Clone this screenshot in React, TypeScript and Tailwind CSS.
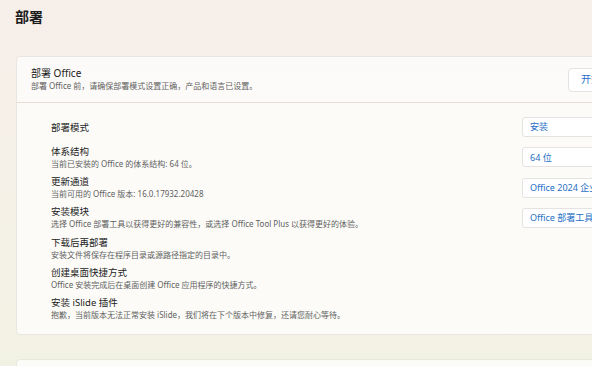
const rows: { title: string; desc?: string; value?: string }[] = [
    { title: '部署模式', value: '安装' },
    { title: '体系结构', desc: '当前已安装的 Office 的体系结构: 64 位。', value: '64 位' },
    { title: '更新通道', desc: '当前可用的 Office 版本: 16.0.17932.20428', value: 'Office 2024 企业长期版' },
    {
        title: '安装模块',
        desc: '选择 Office 部署工具以获得更好的兼容性，或选择 Office Tool Plus 以获得更好的体验。',
        value: 'Office 部署工具',
    },
    { title: '下载后再部署', desc: '安装文件将保存在程序目录或源路径指定的目录中。' },
    { title: '创建桌面快捷方式', desc: 'Office 安装完成后在桌面创建 Office 应用程序的快捷方式。' },
    { title: '安装 iSlide 插件', desc: '抱歉，当前版本无法正常安装 iSlide，我们将在下个版本中修复，还请您耐心等待。' },
];

export default function App() {
    return (
        <div className="h-[366px] w-[592px] overflow-hidden bg-gradient-to-b from-[#f7efea] to-[#f2f2e4] font-['Noto_Sans','Noto_Sans_CJK_SC',sans-serif] text-[#1b1b1b]">
            {/* ── Page heading ── */}
            <h1 className="pl-[15px] pt-[7px] text-[14px] leading-[20px] font-bold">部署</h1>

            {/* ── Deploy card ── */}
            <div className="mt-[29px] ml-[16px] w-[633px] rounded-[4px] border border-[#ebe5e1] bg-white/70">
                <div className="flex h-[46px] items-center justify-between border-b border-[#eadcd5] px-[14px]">
                    <div>
                        <p className="text-[10px] leading-[13px]">部署 Office</p>
                        <p className="text-[8px] leading-[12px] text-[#5f5f5f]">
                            部署 Office 前，请确保部署模式设置正确，产品和语言已设置。
                        </p>
                    </div>
                    <button className="h-[24px] w-[66px] rounded-[4px] border border-[#e6e2df] bg-white text-[10px] text-[#1f6fc5]">
                        开始部署
                    </button>
                </div>

                <div className="pt-[9px] pb-[10px]">
                    {rows.map((row) => (
                        <div key={row.title} className="flex h-[30.25px] items-center justify-between pr-[14px] pl-[34px]">
                            <div>
                                <p className="text-[9.5px] leading-[13px] text-[#222]">{row.title}</p>
                                {row.desc && <p className="text-[8px] leading-[12px] text-[#5f5f5f]">{row.desc}</p>}
                            </div>
                            {row.value ? (
                                <div className="flex h-[20px] w-[112px] items-center rounded-[3px] border border-[#e5e3e1] bg-white pl-[7px] text-[9px] whitespace-nowrap text-[#1f6fc5]">
                                    {row.value}
                                </div>
                            ) : (
                                <div className="h-[18px] w-[36px] rounded-full border border-[#8a8a8a]" />
                            )}
                        </div>
                    ))}
                </div>
            </div>

            {/* ── Next card ── */}
            <div className="mt-[24px] ml-[16px] h-[60px] w-[633px] rounded-[4px] border border-[#e8e7dc] bg-white/70" />
        </div>
    );
}
